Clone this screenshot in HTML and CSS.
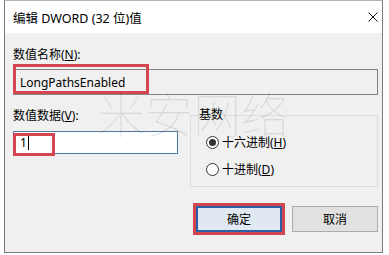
FILE: index.html
```html
<!DOCTYPE html>
<html lang="zh-CN">
<head>
    <meta charset="UTF-8">
    <title>编辑 DWORD (32 位)值</title>
    <link rel="stylesheet" href="styles.css">
</head>
<body>
    <div class="dialog">
        <div class="titlebar">
            <span class="title">编辑 DWORD (32 位)值</span>
            <svg class="close" viewBox="0 0 10 10" fill="none" stroke="#111" stroke-width="1">
                <path d="M0.5 0.5L9.5 9.5M9.5 0.5L0.5 9.5"/>
            </svg>
        </div>
        <div class="content">
            <div class="label">数值名称(<u>N</u>):</div>
            <div class="field field-name">
                LongPathsEnabled
                <span class="mark mark-name"></span>
            </div>
            <div class="row">
                <div class="col">
                    <div class="label">数值数据(<u>V</u>):</div>
                    <div class="field field-value">1<span class="caret"></span>
                        <span class="mark mark-value"></span>
                    </div>
                </div>
                <fieldset class="group">
                    <legend>基数</legend>
                    <div class="radio"><span class="dot checked"></span>十六进制(<u>H</u>)</div>
                    <div class="radio"><span class="dot"></span>十进制(<u>D</u>)</div>
                </fieldset>
            </div>
            <div class="buttons">
                <button class="btn btn-ok">确定</button>
                <button class="btn">取消</button>
            </div>
        </div>
        <div class="watermark">米安网络</div>
    </div>
</body>
</html>
```

FILE: styles.css
```css
body {
    margin: 0;
    background: #fff;
    font-family: "Noto Sans", "Noto Sans CJK SC", sans-serif;
    font-size: 12px;
    color: #000;
}

.dialog {
    position: relative;
    box-sizing: border-box;
    width: 379px;
    height: 253px;
    margin-left: 4px;
    border: 1px solid #7a7a7a;
    border-top-color: #b5b5b5;
    background: #f0f0f0;
    display: flex;
    flex-direction: column;
}

.titlebar {
    height: 32px;
    padding: 0 4px 0 8px;
    background: #fff;
    display: flex;
    align-items: center;
    justify-content: space-between;
}

.title {
    font-size: 12.5px;
}

.close {
    width: 10px;
    height: 10px;
}

.content {
    padding: 14px 4px 0 8px;
}

.label {
    line-height: 16px;
}

.field {
    position: relative;
    box-sizing: border-box;
    margin-top: 6px;
    padding-left: 6px;
    display: flex;
    align-items: center;
}

.field-name {
    height: 26px;
    border: 1px solid #848484;
    background: #f0f0f0;
}

.field-value {
    height: 23px;
    margin-top: 7px;
    border: 1px solid #4b7aa4;
    background: #fff;
}

.caret {
    width: 1px;
    height: 14px;
    margin-left: 1px;
    background: #000;
}

.mark {
    position: absolute;
    box-sizing: border-box;
    border: 3px solid #d4464f;
}

.mark-name {
    left: -1px;
    top: -6px;
    width: 136px;
    height: 30px;
}

.mark-value {
    left: -1px;
    top: 1px;
    width: 42px;
    height: 23px;
}

.row {
    display: flex;
    gap: 12px;
    margin-top: 13px;
}

.col {
    width: 165px;
}

.group {
    flex: 1;
    min-width: 0;
    margin: -1px 0 0 0;
    padding: 0 8px 7px 8px;
    border: 1px solid #dcdcdc;
}

.group legend {
    padding: 0;
    line-height: 16px;
}

.radio {
    height: 20px;
    display: flex;
    align-items: center;
    margin-top: 7px;
}

.radio:first-of-type {
    margin-top: 9px;
}

.dot {
    box-sizing: border-box;
    width: 13px;
    height: 13px;
    margin: 0 3px 0 7px;
    border: 1px solid #333;
    border-radius: 50%;
    background: #fff;
    display: flex;
    align-items: center;
    justify-content: center;
}

.dot.checked::after {
    content: "";
    width: 7px;
    height: 7px;
    border-radius: 50%;
    background: #333;
}

.buttons {
    display: flex;
    justify-content: flex-end;
    gap: 10px;
    margin-top: 19px;
}

.btn {
    box-sizing: border-box;
    width: 86px;
    height: 26px;
    padding: 0;
    font-family: inherit;
    font-size: 12px;
    color: #000;
    background: #e1e1e1;
    border: 1px solid #adadad;
}

.btn-ok {
    background: #e0e8f1;
    border: 2px solid #2c5fa6;
    outline: 3px solid #d4464f;
}

.watermark {
    position: absolute;
    left: 92px;
    top: 87px;
    font-family: "Noto Sans CJK SC", sans-serif;
    font-weight: 100;
    font-size: 48px;
    line-height: 1;
    color: rgba(0, 0, 0, 0.1);
    pointer-events: none;
}
```
